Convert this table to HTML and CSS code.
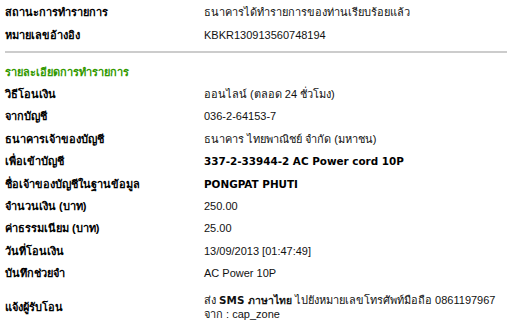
FILE: index.html
```html
<!DOCTYPE html>
<html>
<head>
<meta charset="utf-8">
<link rel="stylesheet" href="styles.css">
</head>
<body>
<div class="page">
  <div class="row"><div class="label">สถานะการทำรายการ</div><div class="value">ธนาคารได้ทำรายการของท่านเรียบร้อยแล้ว</div></div>
  <div class="row"><div class="label">หมายเลขอ้างอิง</div><div class="value">KBKR130913560748194</div></div>
  <div class="sep"></div>
  <div class="heading">รายละเอียดการทำรายการ</div>
  <div class="row"><div class="label">วิธีโอนเงิน</div><div class="value">ออนไลน์ (ตลอด 24 ชั่วโมง)</div></div>
  <div class="row"><div class="label">จากบัญชี</div><div class="value">036-2-64153-7</div></div>
  <div class="row"><div class="label">ธนาคารเจ้าของบัญชี</div><div class="value">ธนาคาร ไทยพาณิชย์ จำกัด (มหาชน)</div></div>
  <div class="row"><div class="label">เพื่อเข้าบัญชี</div><div class="value strong">337-2-33944-2 AC Power cord 10P</div></div>
  <div class="row"><div class="label">ชื่อเจ้าของบัญชีในฐานข้อมูล</div><div class="value strong">PONGPAT PHUTI</div></div>
  <div class="row"><div class="label">จำนวนเงิน (บาท)</div><div class="value">250.00</div></div>
  <div class="row"><div class="label">ค่าธรรมเนียม (บาท)</div><div class="value">25.00</div></div>
  <div class="row"><div class="label">วันที่โอนเงิน</div><div class="value">13/09/2013 [01:47:49]</div></div>
  <div class="row"><div class="label">บันทึกช่วยจำ</div><div class="value">AC Power 10P</div></div>
  <div class="row last"><div class="label">แจ้งผู้รับโอน</div><div class="value multi"><div class="line">ส่ง <b class="sms">SMS ภาษาไทย</b> ไปยังหมายเลขโทรศัพท์มือถือ 0861197967</div><div class="line">จาก : cap_zone</div></div></div>
</div>
</body>
</html>
```
FILE: styles.css
```css
html, body { margin: 0; padding: 0; background: #fff; }
body {
  font-family: "Liberation Sans", Arial, sans-serif;
  font-size: 11px;
  color: #111;
}
.page { padding: 1px 1px 0 5px; }
.row {
  display: grid;
  grid-template-columns: 199px 1fr;
  height: 22.4px;
  align-items: center;
}
.label { font-weight: bold; color: #000; white-space: nowrap; }
.value { color: #111; white-space: nowrap; }
.strong { font-weight: bold; font-family: "DejaVu Sans", "Liberation Sans", sans-serif; font-size: 10.4px; color: #000; }
.sms { font-family: "DejaVu Sans", "Liberation Sans", sans-serif; font-size: 10.4px; }
.sep { height: 2px; background: #cccccc; margin: 5px 0 8px; }
.heading { color: #339900; font-weight: bold; height: 22px; line-height: 22px; }
.row.last { height: 40px; align-items: start; }
.row.last .label { padding-top: 16px; line-height: 14px; }
.multi { padding-top: 9px; line-height: 14px; }
```
